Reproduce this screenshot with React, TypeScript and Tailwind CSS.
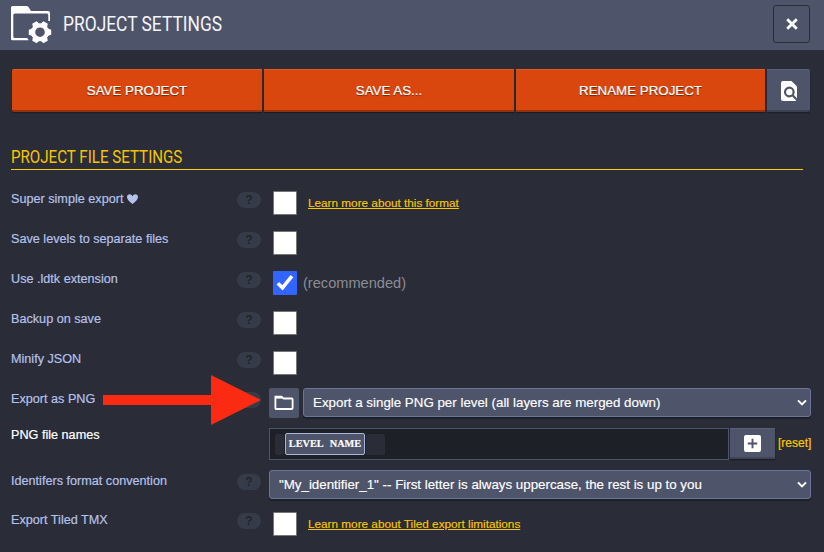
import type { ReactNode } from "react";

const ACTION =
  "flex h-[43px] items-center justify-center border-b-2 border-t border-b-[#96330f] border-t-[#e25a24] bg-[#d9470e] pt-[1px] text-[13.333px] text-white shadow-[0_1px_1px_#1c1d25] [text-shadow:0_1px_1px_rgba(0,0,0,0.5)] [-webkit-text-stroke:0.2px_#fff]";
const SELECT =
  "flex h-[29px] items-center justify-between rounded-[3px] border border-[#6b7399] bg-[#4e546a] pl-[9px] pr-[3px] text-[13.333px] text-white shadow-[0_2px_0_#1e2027] [-webkit-text-stroke:0.15px_#fff]";
const LINK =
  "ml-[11px] mt-[6px] text-[11.75px] leading-[18px] text-[#fac800] underline [-webkit-text-stroke:0.15px_#fac800]";

function Help() {
  return (
    <span className="mt-[9px] flex h-4 w-6 shrink-0 items-center justify-center rounded-full bg-[#363b49] text-[12px] font-bold text-[#22242c]">
      ?
    </span>
  );
}

function Row({
  label,
  className = "h-10",
  labelClass = "pt-[6px] text-[#b4c1ea]",
  help = true,
  children,
}: {
  label: ReactNode;
  className?: string;
  labelClass?: string;
  help?: boolean;
  children: ReactNode;
}) {
  return (
    <div className={`flex items-start ${className}`}>
      <div className={`w-[226px] shrink-0 text-[12.65px] leading-5 [-webkit-text-stroke:0.2px_currentColor] ${labelClass}`}>
        {label}
      </div>
      {help ? <Help /> : <span className="w-6 shrink-0" />}
      <div className="ml-2 flex w-[543px] pt-[5px]">{children}</div>
    </div>
  );
}

function Check({ checked = false }: { checked?: boolean }) {
  return checked ? (
    <span className="ml-1 mt-[3px] h-6 w-6 shrink-0 rounded-[1px] bg-[#3264ff]">
      <svg viewBox="0 0 24 24" className="h-6 w-6" fill="none" stroke="#fff" strokeWidth="3.6">
        <path d="M4.800 12.300 9.500 16.800 18.900 5.200" />
      </svg>
    </span>
  ) : (
    <span className="ml-1 mt-[3px] h-6 w-6 shrink-0 rounded-[1px] border border-[#767676] bg-white" />
  );
}

function Chevron() {
  return (
    <svg viewBox="0 0 10 8" className="h-2 w-[10px]" fill="none" stroke="#fff" strokeWidth="2">
      <path d="M1 1.400 5 5.400 9 1.400" />
    </svg>
  );
}

function ProjectIcon() {
  return (
    <svg viewBox="0 0 42 38" className="h-[38px] w-[42px]" fill="#fff">
      <path d="M1.500 1H15.500Q16.800 1 17.500 2L20 6H37Q39 6 39 8V16H37.300V10Q37.300 8.500 36 8.500H4Q2.300 8.500 2.300 10V31.500Q2.300 33 4 33H15.500Q17.500 33.500 17.500 35.300H1.500Q0 35.300 0 33.800V2.500Q0 1 1.500 1Z" />
      <g transform="translate(29 27.200)">
        <circle r="6.900" fill="none" stroke="#fff" strokeWidth="4.200" />
        <path d="M-3.600-8-2.500-11.200H2.500L3.600-8Z" transform="rotate(30)" />
        <path d="M-3.600-8-2.500-11.200H2.500L3.600-8Z" transform="rotate(90)" />
        <path d="M-3.600-8-2.500-11.200H2.500L3.600-8Z" transform="rotate(150)" />
        <path d="M-3.600-8-2.500-11.200H2.500L3.600-8Z" transform="rotate(210)" />
        <path d="M-3.600-8-2.500-11.200H2.500L3.600-8Z" transform="rotate(270)" />
        <path d="M-3.600-8-2.500-11.200H2.500L3.600-8Z" transform="rotate(330)" />
      </g>
    </svg>
  );
}

export default function App() {
  return (
    <div className="relative h-[552px] w-[824px] overflow-hidden bg-[#2a2c37] font-['Liberation_Sans',Arial,sans-serif]">
      <header className="flex h-[50px] items-start bg-[#4e546a] pl-[11px] pt-[5px]">
        <ProjectIcon />
        <h1 className="ml-[10px] mt-[5px] w-[160px] origin-left scale-x-[0.828] whitespace-nowrap font-['Roboto',sans-serif] text-[21px] leading-7 text-[#f4f5f8]">
          PROJECT SETTINGS
        </h1>
        <button className="ml-auto mr-[14px] flex h-[38px] w-[37px] items-center justify-center rounded-[3px] border border-[#2a2c37] bg-[#4e546a]">
          <svg viewBox="0 0 12 12" className="h-3 w-3" stroke="#fff" strokeWidth="2.8">
            <path d="M1.200 1.200 10.800 10.800M10.800 1.200 1.200 10.800" />
          </svg>
        </button>
      </header>

      <div className="flex gap-[2px] pl-3 pt-[19px]">
        <button className={`w-[250px] rounded-l-[2px] ${ACTION}`}>SAVE PROJECT</button>
        <button className={`w-[250px] ${ACTION}`}>SAVE AS...</button>
        <button className={`w-[249px] ${ACTION}`}>RENAME PROJECT</button>
        <button className="flex h-[43px] w-[43px] items-center justify-center rounded-r-[2px] border-b-2 border-t border-b-[#3b4053] border-t-[#5a6078] bg-[#4e546a] shadow-[0_1px_1px_#1c1d25]">
          <svg viewBox="0 0 16 20" className="mt-[2px] h-5 w-4">
            <path d="M2 0H10.500L16 5.500V18Q16 20 14 20H2Q0 20 0 18V2Q0 0 2 0Z" fill="#fff" />
            <circle cx="8.300" cy="11" r="4.300" fill="none" stroke="#4e546a" strokeWidth="2.200" />
            <path d="M11.300 14 16.500 19.300" stroke="#4e546a" strokeWidth="2.200" />
          </svg>
        </button>
      </div>

      <div className="ml-[11px] mt-[32px] h-[26px] w-[792px] border-b border-[#ffcc00]">
        <h2 className="w-[200px] origin-left scale-x-[0.84] whitespace-nowrap font-['Roboto',sans-serif] text-[18px] leading-[26px] text-[#f5c505]">
          PROJECT FILE SETTINGS
        </h2>
      </div>

      <main className="pl-[11px] pt-[13px]">
        <Row
          label={
            <span className="flex items-center gap-1">
              Super simple export
              <svg viewBox="0 0 12 10" className="h-[10px] w-[11px]" preserveAspectRatio="none" fill="#b4c1ea">
                <path d="M6 10C2.500 7.800 0 5.500 0 3 0 1.200 1.300.3 2.800.3 4.200.3 5.400 1 6 2.300 6.600 1 7.800.3 9.200.3 10.700.3 12 1.200 12 3 12 5.500 9.500 7.800 6 10Z" />
              </svg>
            </span>
          }
        >
          <Check />
          <a className={LINK}>Learn more about this format</a>
        </Row>
        <Row label="Save levels to separate files"><Check /></Row>
        <Row label="Use .ldtk extension">
          <Check checked />
          <span className="ml-[6px] mt-[5px] text-[14.6px] leading-5 text-[#8b8d94]">(recommended)</span>
        </Row>
        <Row label="Backup on save"><Check /></Row>
        <Row label="Minify JSON"><Check /></Row>
        <Row label="Export as PNG">
          <button className="flex h-[30px] w-[30px] shrink-0 items-center justify-center rounded-[2px] bg-[#4e546a]">
            <svg viewBox="0 0 20 16" className="h-4 w-5" fill="none" stroke="#fff" strokeWidth="1.8">
              <path d="M1.400 1.600H7.500L9.500 3.500H17.600Q18.600 3.500 18.600 4.500V13Q18.600 14 17.600 14H2.400Q1.400 14 1.400 13Z" />
              <path d="M1.500 2.700H8" />
            </svg>
          </button>
          <div className={`ml-1 w-[508px] ${SELECT}`}>
            Export a single PNG per level (all layers are merged down) <Chevron />
          </div>
        </Row>
        <Row label="PNG file names" help={false} className="h-[42px]" labelClass="pt-[2px] text-white">
          <div className="flex h-8 w-[460px] shrink-0 border border-[#4e546a] bg-[#1e2027] pl-[5px] pt-1">
            <span className="mt-[1px] h-[21px] w-[9px] rounded-[2px] bg-[#2a2c37]" />
            <span className="ml-[1px] flex h-[22px] w-[80px] items-center justify-center whitespace-nowrap rounded-[2px] border border-[#a9b4dd] bg-[#4e546a] pb-[1px] font-['Liberation_Serif',serif] text-[10.3px] font-bold text-white [-webkit-text-stroke:0.2px_#fff] [word-spacing:4px]">
              LEVEL NAME
            </span>
            <span className="ml-[1px] mt-[1px] h-[21px] w-[19px] rounded-[2px] bg-[#2a2c37]" />
          </div>
          <button className="ml-[1px] flex h-[31px] w-[45px] shrink-0 items-center justify-center border-b-2 border-t border-b-[#3f4458] border-t-[#5a6078] bg-[#4e546a] shadow-[0_1px_1px_#1c1d25]">
            <svg viewBox="0 0 18 18" className="h-[17px] w-[17px]">
              <rect width="18" height="18" rx="2" fill="#fff" />
              <path d="M9 4V14M4 9H14" stroke="#4e546a" strokeWidth="2" />
            </svg>
          </button>
          <span className="ml-[3px] mt-[5px] whitespace-nowrap text-[12px] leading-5 text-[#fac800] [-webkit-text-stroke:0.2px_#fac800]">[reset]</span>
        </Row>
        <Row label="Identifers format convention" className="h-[39px]">
          <div className={`w-[542px] ${SELECT}`}>
            "My_identifier_1" -- First letter is always uppercase, the rest is up to you <Chevron />
          </div>
        </Row>
        <Row label="Export Tiled TMX">
          <Check />
          <a className={LINK}>Learn more about Tiled export limitations</a>
        </Row>
      </main>

      <svg viewBox="0 0 158 50" className="absolute left-[103px] top-[375px] h-[50px] w-[158px]" fill="#fb2a12">
        <path d="M0 20H108V0L158 25 108 50V30H0Z" />
      </svg>
    </div>
  );
}
